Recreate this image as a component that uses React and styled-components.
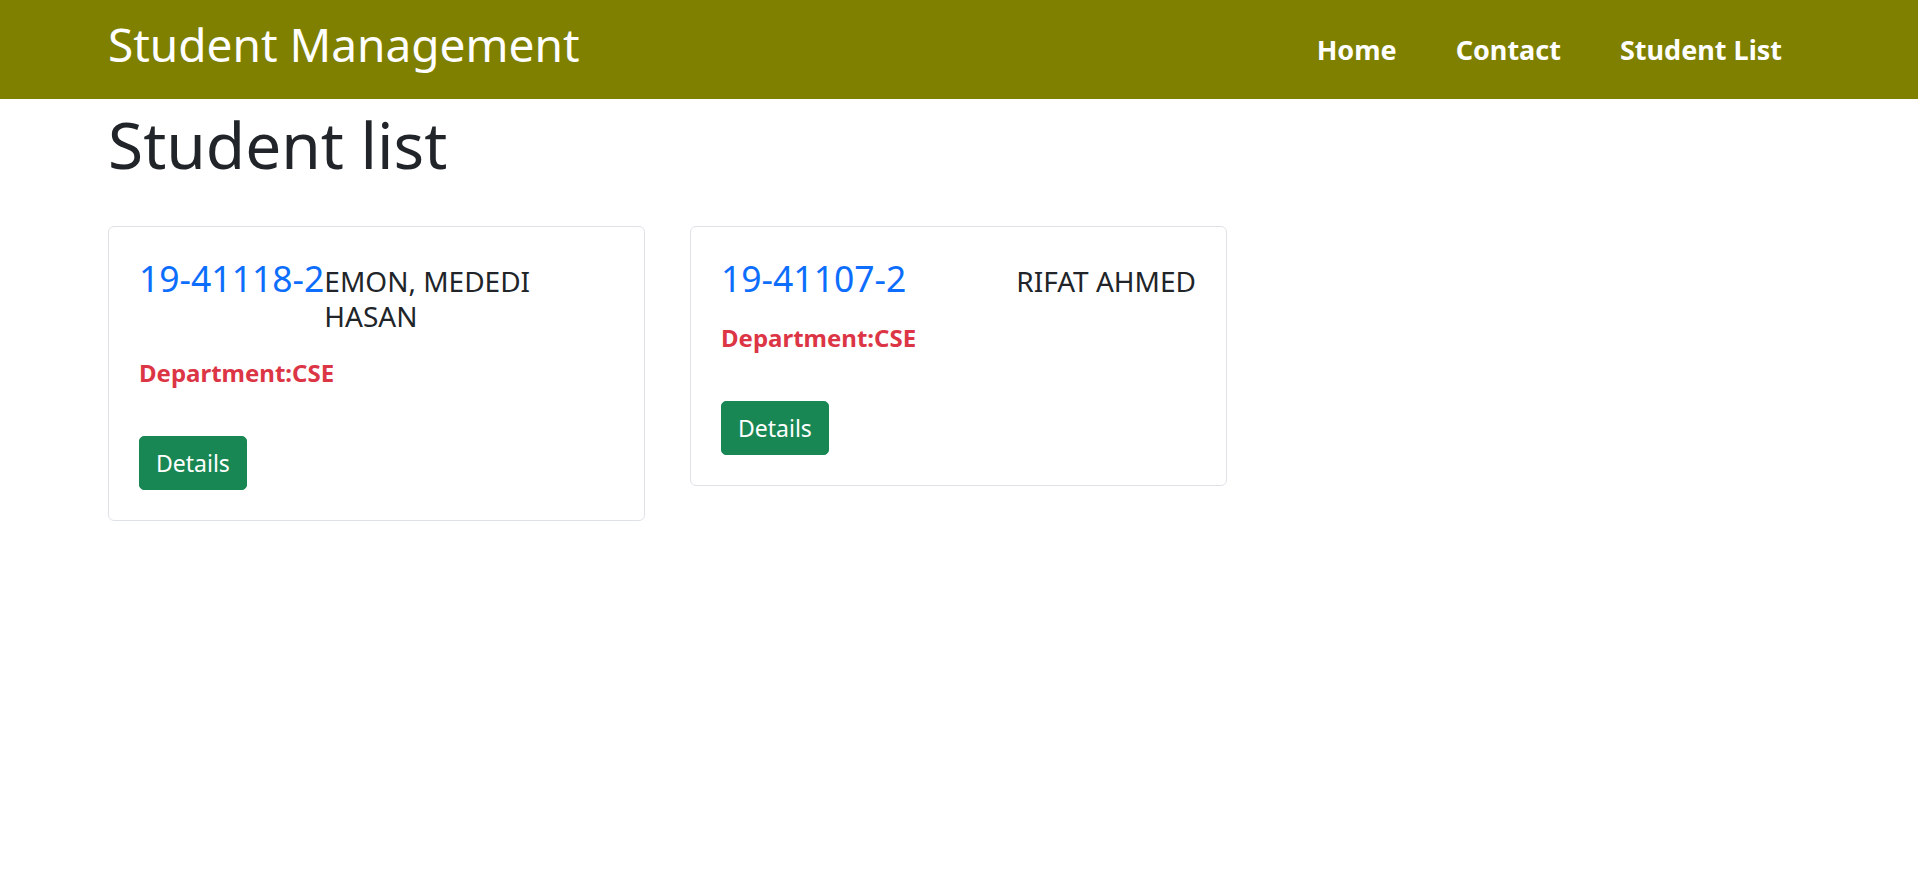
import React from 'react';
import styled, { createGlobalStyle } from 'styled-components';

const GlobalStyle = createGlobalStyle`
  body {
    margin: 0;
    font-family: 'Noto Sans', 'Open Sans', sans-serif;
    color: #212529;
    background: #fff;
  }
`;

const NavBar = styled.nav`
  background: #808000;
  height: 99px;
  padding: 0 108px;
  display: flex;
  align-items: center;
  justify-content: space-between;
  box-sizing: border-box;
`;

const Brand = styled.a`
  color: #fff;
  font-size: 46px;
  text-decoration: none;
  line-height: 1.2;
  margin-top: -10px;
`;

const NavLinks = styled.ul`
  list-style: none;
  margin: 0;
  padding: 0 28px 0 0;
  display: flex;
  gap: 59px;
`;

const NavLink = styled.a`
  color: #fff;
  font-size: 27px;
  font-weight: 700;
  text-decoration: none;
`;

const Page = styled.main`
  padding: 0 108px;
`;

const Heading = styled.h1`
  font-size: 64px;
  font-weight: 400;
  line-height: 1.2;
  margin: 8px 0 42px;
`;

const CardGrid = styled.div`
  display: grid;
  grid-template-columns: repeat(3, 537px);
  gap: 45px;
  align-items: start;
`;

const Card = styled.div`
  border: 1px solid #dee2e6;
  border-radius: 6px;
  padding: 30px;
`;

const CardHead = styled.div`
  display: flex;
  justify-content: space-between;
  align-items: baseline;
  margin-bottom: 24px;
`;

const StudentId = styled.span`
  color: #0d6efd;
  font-size: 35.5px;
  line-height: 1.2;
  white-space: nowrap;
  flex-shrink: 0;
`;

const StudentName = styled.span`
  font-size: 28px;
  line-height: 35px;
`;

const Department = styled.p`
  color: #dc3545;
  font-size: 24px;
  font-weight: 700;
  line-height: 29px;
  margin: 0 0 49px;
`;

const DetailsButton = styled.button`
  background: #198754;
  color: #fff;
  border: 1px solid #198754;
  border-radius: 5px;
  font-family: inherit;
  font-size: 23px;
  line-height: 30px;
  padding: 11px 16px;
  cursor: pointer;
`;

const students = [
  { id: '19-41118-2', name: 'EMON, MEDEDI HASAN', dept: 'CSE' },
  { id: '19-41107-2', name: 'RIFAT AHMED', dept: 'CSE' },
];

const App = () => {
  return (
    <>
      <GlobalStyle />
      <NavBar>
        <Brand href='#'>Student Management</Brand>
        <NavLinks>
          <li><NavLink href='#'>Home</NavLink></li>
          <li><NavLink href='#'>Contact</NavLink></li>
          <li><NavLink href='#'>Student List</NavLink></li>
        </NavLinks>
      </NavBar>
      <Page>
        <Heading>Student list</Heading>
        <CardGrid>
          {students.map((s) => (
            <Card key={s.id}>
              <CardHead>
                <StudentId>{s.id}</StudentId>
                <StudentName>{s.name}</StudentName>
              </CardHead>
              <Department>Department:{s.dept}</Department>
              <DetailsButton>Details</DetailsButton>
            </Card>
          ))}
        </CardGrid>
      </Page>
    </>
  );
};

export default App;
